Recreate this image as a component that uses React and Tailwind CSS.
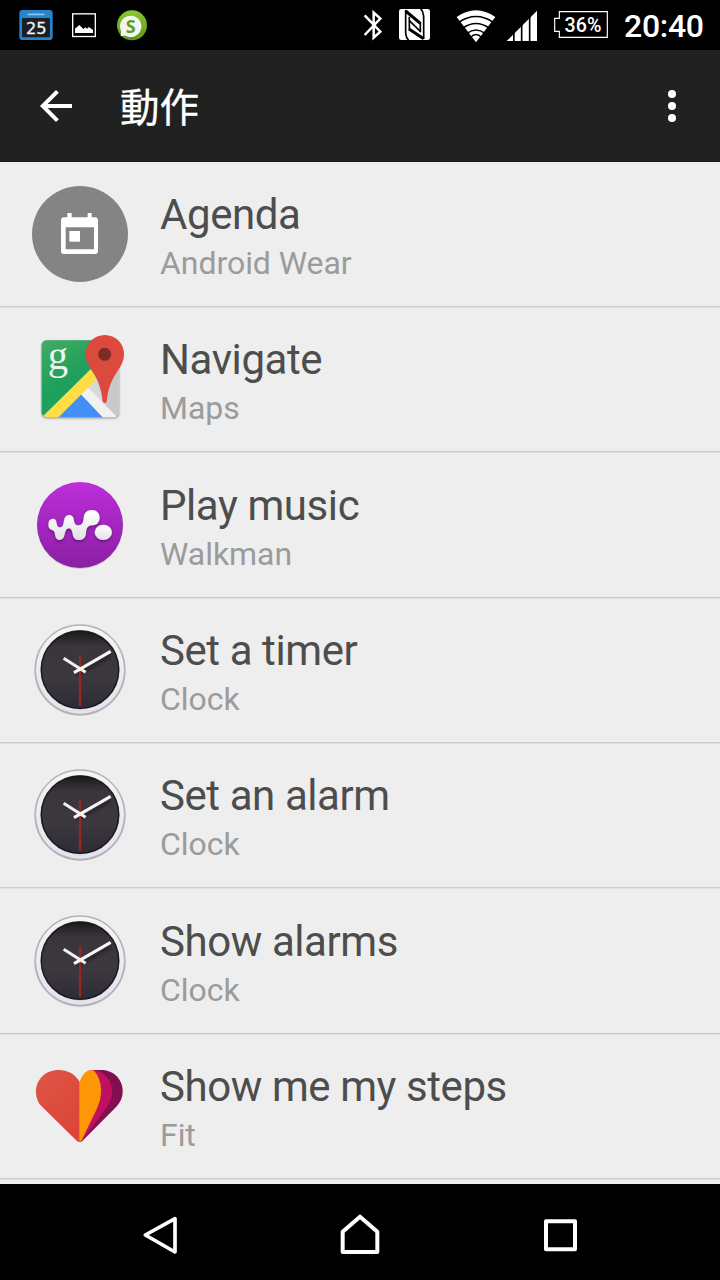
import React from "react";

const AgendaIcon = () => (
  <svg viewBox="96 48 288 288" className="w-24 h-24 shrink-0">
    <circle cx="240" cy="192" r="144" fill="#848484" />
    <path
      fill="#fff"
      fillRule="evenodd"
      d="M202 129h13v13h48v-13h12v13h9a10 10 0 0 1 10 10v90a10 10 0 0 1-10 10h-91a10 10 0 0 1-10-10v-90a10 10 0 0 1 10-10h9zM197 172v66h85v-66z"
    />
    <rect x="208" y="183" width="32" height="32" fill="#fff" />
  </svg>
);

const MapsIcon = () => (
  <svg viewBox="36 34 288 288" className="w-24 h-24 shrink-0 overflow-visible">
    <defs>
      <clipPath id="mapBody">
        <rect x="65" y="62" width="232" height="231" rx="15" />
      </clipPath>
      <linearGradient id="mapGreen" x1="0" y1="0" x2="0.6" y2="1">
        <stop offset="0" stopColor="#43ac64" />
        <stop offset="0.5" stopColor="#1fa05c" />
        <stop offset="1" stopColor="#1ba260" />
      </linearGradient>
      <filter id="mapShadow" x="-10%" y="-10%" width="120%" height="120%">
        <feGaussianBlur stdDeviation="3" />
      </filter>
    </defs>
    <rect x="65" y="65" width="232" height="231" rx="15" fill="#000" opacity="0.4" filter="url(#mapShadow)" />
    <g clipPath="url(#mapBody)">
      <rect x="60" y="60" width="240" height="240" fill="#c9c9c9" />
      <path d="M204 203L228 178L254 250L240 240z" fill="#d8d8d8" />
      <path d="M60 60H300L60 300z" fill="url(#mapGreen)" />
      <path d="M183 224L113 295H252z" fill="#4290f5" />
      <path d="M183 224L204 203L294 295H250z" fill="#f1f1f1" />
      <path d="M66 292L214 149L232 176L113 295H66z" fill="#ffdd45" />
    </g>
    <path
      d="M254 46C222 46 197 71 197 103C197 128 210 144 225 168C241 195 245 219 248 245Q249 250 254 250Q259 250 260 245C263 219 268 195 284 168C299 144 312 128 312 103C312 71 287 46 254 46z"
      fill="#dc493d"
    />
    <circle cx="254" cy="104" r="19.5" fill="#7e2a25" />
    <text x="83" y="147" fontSize="122" fontFamily="Liberation Serif, serif" fill="#eef3ef">
      g
    </text>
  </svg>
);

const WalkmanIcon = () => (
  <svg viewBox="36 35 288 288" className="w-24 h-24 shrink-0">
    <defs>
      <linearGradient id="walkBg" x1="0" y1="0" x2="0" y2="1">
        <stop offset="0" stopColor="#bd2edb" />
        <stop offset="1" stopColor="#8a1fa3" />
      </linearGradient>
      <linearGradient id="walkFg" x1="0" y1="0" x2="0" y2="1">
        <stop offset="0" stopColor="#fff" />
        <stop offset="1" stopColor="#e2e2e2" />
      </linearGradient>
      <filter id="walkShadow" x="-20%" y="-20%" width="140%" height="150%">
        <feDropShadow dx="0" dy="5" stdDeviation="4" floodColor="#400050" floodOpacity="0.55" />
      </filter>
    </defs>
    <circle cx="180" cy="182" r="129" fill="#000" opacity="0.15" />
    <circle cx="180" cy="179" r="129" fill="url(#walkBg)" />
    <g fill="url(#walkFg)" filter="url(#walkShadow)">
      <path d="M85 178C85 166 90 160 98 160C107 160 109 166 110 174C111 184 116 187 121 186C130 184 130 176 132 165C134 154 140 149 148 149C157 149 161 156 162 166C163 176 168 180 176 180C186 179 190 172 191 158C192 142 202 134 216 134C230 134 239 144 239 157C239 170 230 180 216 180C202 181 199 190 198 203C197 217 190 224 178 224C166 224 160 218 158 206C156 194 152 189 147 189C140 189 136 195 134 207C132 219 127 224 119 224C110 224 106 217 105 206C104 199 101 196 96 194C89 192 85 186 85 178z" />
      <ellipse cx="250" cy="201" rx="26" ry="23" />
    </g>
  </svg>
);

const ClockIcon = () => (
  <svg viewBox="36 36 288 288" className="w-24 h-24 shrink-0">
    <defs>
      <linearGradient id="clockRim" x1="0" y1="0" x2="0" y2="1">
        <stop offset="0" stopColor="#f6f5f0" />
        <stop offset="1" stopColor="#e4e2ee" />
      </linearGradient>
      <linearGradient id="clockFace" x1="0" y1="0" x2="0" y2="1">
        <stop offset="0" stopColor="#1c191c" />
        <stop offset="0.2" stopColor="#3a353a" />
        <stop offset="0.6" stopColor="#3d383e" />
        <stop offset="1" stopColor="#2e2b38" />
      </linearGradient>
      <filter id="clockBlur" x="-20%" y="-20%" width="140%" height="140%">
        <feGaussianBlur stdDeviation="4" />
      </filter>
      <filter id="clockEdge" x="-10%" y="-10%" width="120%" height="120%">
        <feGaussianBlur stdDeviation="2" />
      </filter>
    </defs>
    <circle cx="180" cy="180" r="135" fill="#b4b4b7" stroke="#b4b4b7" strokeWidth="4" filter="url(#clockEdge)" />
    <circle cx="180" cy="179" r="132" fill="url(#clockRim)" />
    <circle cx="180" cy="179" r="119" fill="#8f8f96" filter="url(#clockEdge)" />
    <circle cx="180" cy="179" r="116" fill="url(#clockFace)" stroke="#19171a" strokeWidth="4" />
    <path d="M170 195L272 137" stroke="#000" strokeWidth="10" opacity="0.35" filter="url(#clockBlur)" />
    <path d="M180 135V287" stroke="#97271f" strokeWidth="7" />
    <path d="M131 145L197 187" stroke="#f2f2f2" strokeWidth="9" />
    <path d="M162 188L272 124" stroke="#f7f7f7" strokeWidth="9" />
  </svg>
);

const FitIcon = () => (
  <svg viewBox="36 39 288 288" className="w-24 h-24 shrink-0">
    <defs>
      <linearGradient id="fitRed" x1="0" y1="0" x2="0.5" y2="1">
        <stop offset="0" stopColor="#de5546" />
        <stop offset="1" stopColor="#db4639" />
      </linearGradient>
    </defs>
    <path d="M215 75H245C280 75 308 103 308 138C308 158 301 172 289 185L186 289L179 291z" fill="#820f52" />
    <path d="M210 75H222C256 82 276 107 276 140C276 160 270 172 259 188L184 290L179 291z" fill="#bf1160" />
    <path d="M179 111C186 91 197 75 214 75Q219 75 222 77C236 92 243 113 243 138C243 158 238 175 230 193L184 288L179 291z" fill="#ff9606" />
    <path d="M179 111C167 88 143 75 115 75C77 75 48 103 48 140C48 159 55 174 67 186L170 287Q174 291 179 291z" fill="url(#fitRed)" />
  </svg>
);

const items = [
  { title: "Agenda", app: "Android Wear", Icon: AgendaIcon },
  { title: "Navigate", app: "Maps", Icon: MapsIcon },
  { title: "Play music", app: "Walkman", Icon: WalkmanIcon },
  { title: "Set a timer", app: "Clock", Icon: ClockIcon },
  { title: "Set an alarm", app: "Clock", Icon: ClockIcon },
  { title: "Show alarms", app: "Clock", Icon: ClockIcon },
  { title: "Show me my steps", app: "Fit", Icon: FitIcon },
];

const StatusBar = () => (
  <div className="h-[50px] bg-black flex items-center justify-between pl-[18px] pr-4 shrink-0">
    <div className="flex items-center">
      {/* calendario */}
      <svg viewBox="54 0 108 150" className="w-9 h-[50px]">
        <rect x="58" y="30" width="100" height="90" rx="10" fill="#2384cf" />
        <rect x="66" y="54" width="84" height="58" rx="3" fill="#1b1f22" />
        <path d="M84 43H132" stroke="#8cc4ee" strokeWidth="5" strokeLinecap="round" />
        <text
          x="109"
          y="101"
          fontSize="49"
          textLength="62"
          lengthAdjust="spacingAndGlyphs"
          textAnchor="middle"
          fill="#f0f0f0"
          stroke="#f0f0f0"
          strokeWidth="1"
          fontFamily="DejaVu Sans, sans-serif"
        >
          25
        </text>
      </svg>
      {/* captura */}
      <svg viewBox="210 0 84 150" className="w-7 h-[50px] ml-4">
        <rect x="218" y="41.5" width="68" height="68" fill="none" stroke="#fff" strokeWidth="4" />
        <path d="M225 99V86L238 75L250 87L256 82L261 86L267 81L279 90V99z" fill="#fff" />
      </svg>
      {/* mensajes */}
      <svg viewBox="345 0 102 150" className="w-[34px] h-[50px] ml-[17px]">
        <defs>
          <linearGradient id="msgBg" x1="0" y1="0" x2="0" y2="1">
            <stop offset="0" stopColor="#8cc92b" />
            <stop offset="1" stopColor="#5c951a" />
          </linearGradient>
        </defs>
        <circle cx="396" cy="76" r="45" fill="url(#msgBg)" />
        <path d="M362 109L364 92L380 106z" fill="#f4f4f4" />
        <circle cx="392" cy="79" r="32" fill="#f4f4f4" />
        <text x="392" y="98" fontSize="54" fontWeight="700" textAnchor="middle" fill="#5f9c1c" fontFamily="Open Sans, sans-serif">
          S
        </text>
      </svg>
    </div>
    <div className="flex items-center">
      {/* bluetooth */}
      <svg viewBox="36 0 63 150" className="w-[21px] h-[50px]">
        <path d="M44 46L91 95L71 113V38L91 56L44 105" fill="none" stroke="#fff" strokeWidth="7.5" />
      </svg>
      {/* nfc */}
      <svg viewBox="144 0 102 150" className="w-[34px] h-[50px] ml-[15px]">
        <rect x="147" y="27" width="93" height="93" rx="7" fill="#fff" />
        <g fill="none" stroke="#000">
          <path d="M167 30V100Q168 113 176 121M221 117V48Q220 34 212 26" strokeWidth="5" />
          <path d="M167 33L211 70M178 88L221 116" strokeWidth="9" />
          <path d="M178 50V92M211 66V97" strokeWidth="5" />
          <path d="M178 62L211 94" strokeWidth="5" />
        </g>
      </svg>
      {/* wifi */}
      <svg viewBox="315 0 126 150" className="w-[42px] h-[50px] ml-[23px]">
        <path d="M320 51Q378 11 436 51L378 127z" fill="#fff" />
        <path d="M326 67Q378 32 430 67M339 84Q378 57 417 84M351 100Q378 80 405 100" fill="none" stroke="#000" strokeWidth="5" />
        <path d="M361 113Q378 94 395 113" fill="none" stroke="#000" strokeWidth="4" />
      </svg>
      {/* señal */}
      <svg viewBox="465 0 102 150" className="w-[34px] h-[50px] ml-2">
        <path d="M470 123L561 32V123z" fill="#fff" />
        <path d="M491.5 90V125M515 70V125M539 40V125" stroke="#000" strokeWidth="5" />
      </svg>
      {/* bateria */}
      <svg viewBox="606 0 174 150" className="w-[58px] h-[50px] ml-[13px]">
        <path d="M628 35H772V112H628V94H614V55H628z" fill="none" stroke="#fff" strokeWidth="3.5" />
        <text x="699" y="95" fontSize="59" fontWeight="500" textAnchor="middle" fill="#fff" fontFamily="Roboto, sans-serif">
          36%
        </text>
      </svg>
      <span className="w-20 ml-[14px] pt-0.5 text-[32px] leading-[50px] font-medium tracking-[-0.3px] text-white whitespace-nowrap">
        20:40
      </span>
    </div>
  </div>
);

const Header = () => (
  <div className="h-28 bg-[#212121] border-b border-[#191919] flex items-center justify-between pl-8 pr-6 shrink-0">
    <div className="flex items-center">
      <svg viewBox="0 0 24 24" className="w-12 h-12">
        <path fill="#fff" d="M20 11H7.83l5.59-5.59L12 4l-8 8 8 8 1.41-1.41L7.83 13H20v-2z" />
      </svg>
      <h1 className="ml-10 pb-0.5 text-[39.5px] leading-[56px] font-normal text-white font-['Noto_Sans_CJK_TC',sans-serif] [-webkit-text-stroke:0.3px_white]">
        動作
      </h1>
    </div>
    <svg viewBox="0 0 24 24" className="w-12 h-12">
      <g fill="#fff">
        <circle cx="12" cy="6" r="2" />
        <circle cx="12" cy="12" r="2" />
        <circle cx="12" cy="18" r="2" />
      </g>
    </svg>
  </div>
);

const NavBar = () => (
  <div className="h-24 bg-black flex items-center justify-center gap-[104px] shrink-0">
    <svg viewBox="-24 42 288 288" className="w-24 h-24">
      <path d="M76 195L165 146V246z" fill="none" stroke="#fff" strokeWidth="11" strokeLinejoin="round" />
    </svg>
    <svg viewBox="576 42 288 288" className="w-24 h-24">
      <path d="M720 140L668 185V246H772V185z" fill="none" stroke="#fff" strokeWidth="12" strokeLinejoin="round" />
    </svg>
    <svg viewBox="1176 42 288 288" className="w-24 h-24">
      <rect x="1278" y="154" width="87" height="84" fill="none" stroke="#fff" strokeWidth="12" strokeLinejoin="round" />
    </svg>
  </div>
);

const App = () => {
  return (
    <div className="w-[720px] h-[1280px] flex flex-col overflow-hidden bg-[#eeeeee] font-['Roboto',sans-serif]">
      <StatusBar />
      <Header />
      <ul className="flex-1 min-h-0 overflow-hidden">
        {items.map(({ title, app, Icon }) => (
          <li key={title} className="h-[145.33px] flex flex-col">
            <div className="h-36 flex items-center pl-8 shrink-0">
              <Icon />
              <div className="ml-8 pt-2">
                <div className="text-[42px] leading-[50px] tracking-[-0.42px] text-[#4d4d4d]">{title}</div>
                <div className="text-[32px] leading-[46px] tracking-[-0.05px] text-[#9b9b9b]">{app}</div>
              </div>
            </div>
            <div className="h-px bg-[#cccccc] shadow-[0_1px_0_#e0e0e0] shrink-0"></div>
          </li>
        ))}
      </ul>
      <NavBar />
    </div>
  );
};

export default App;
